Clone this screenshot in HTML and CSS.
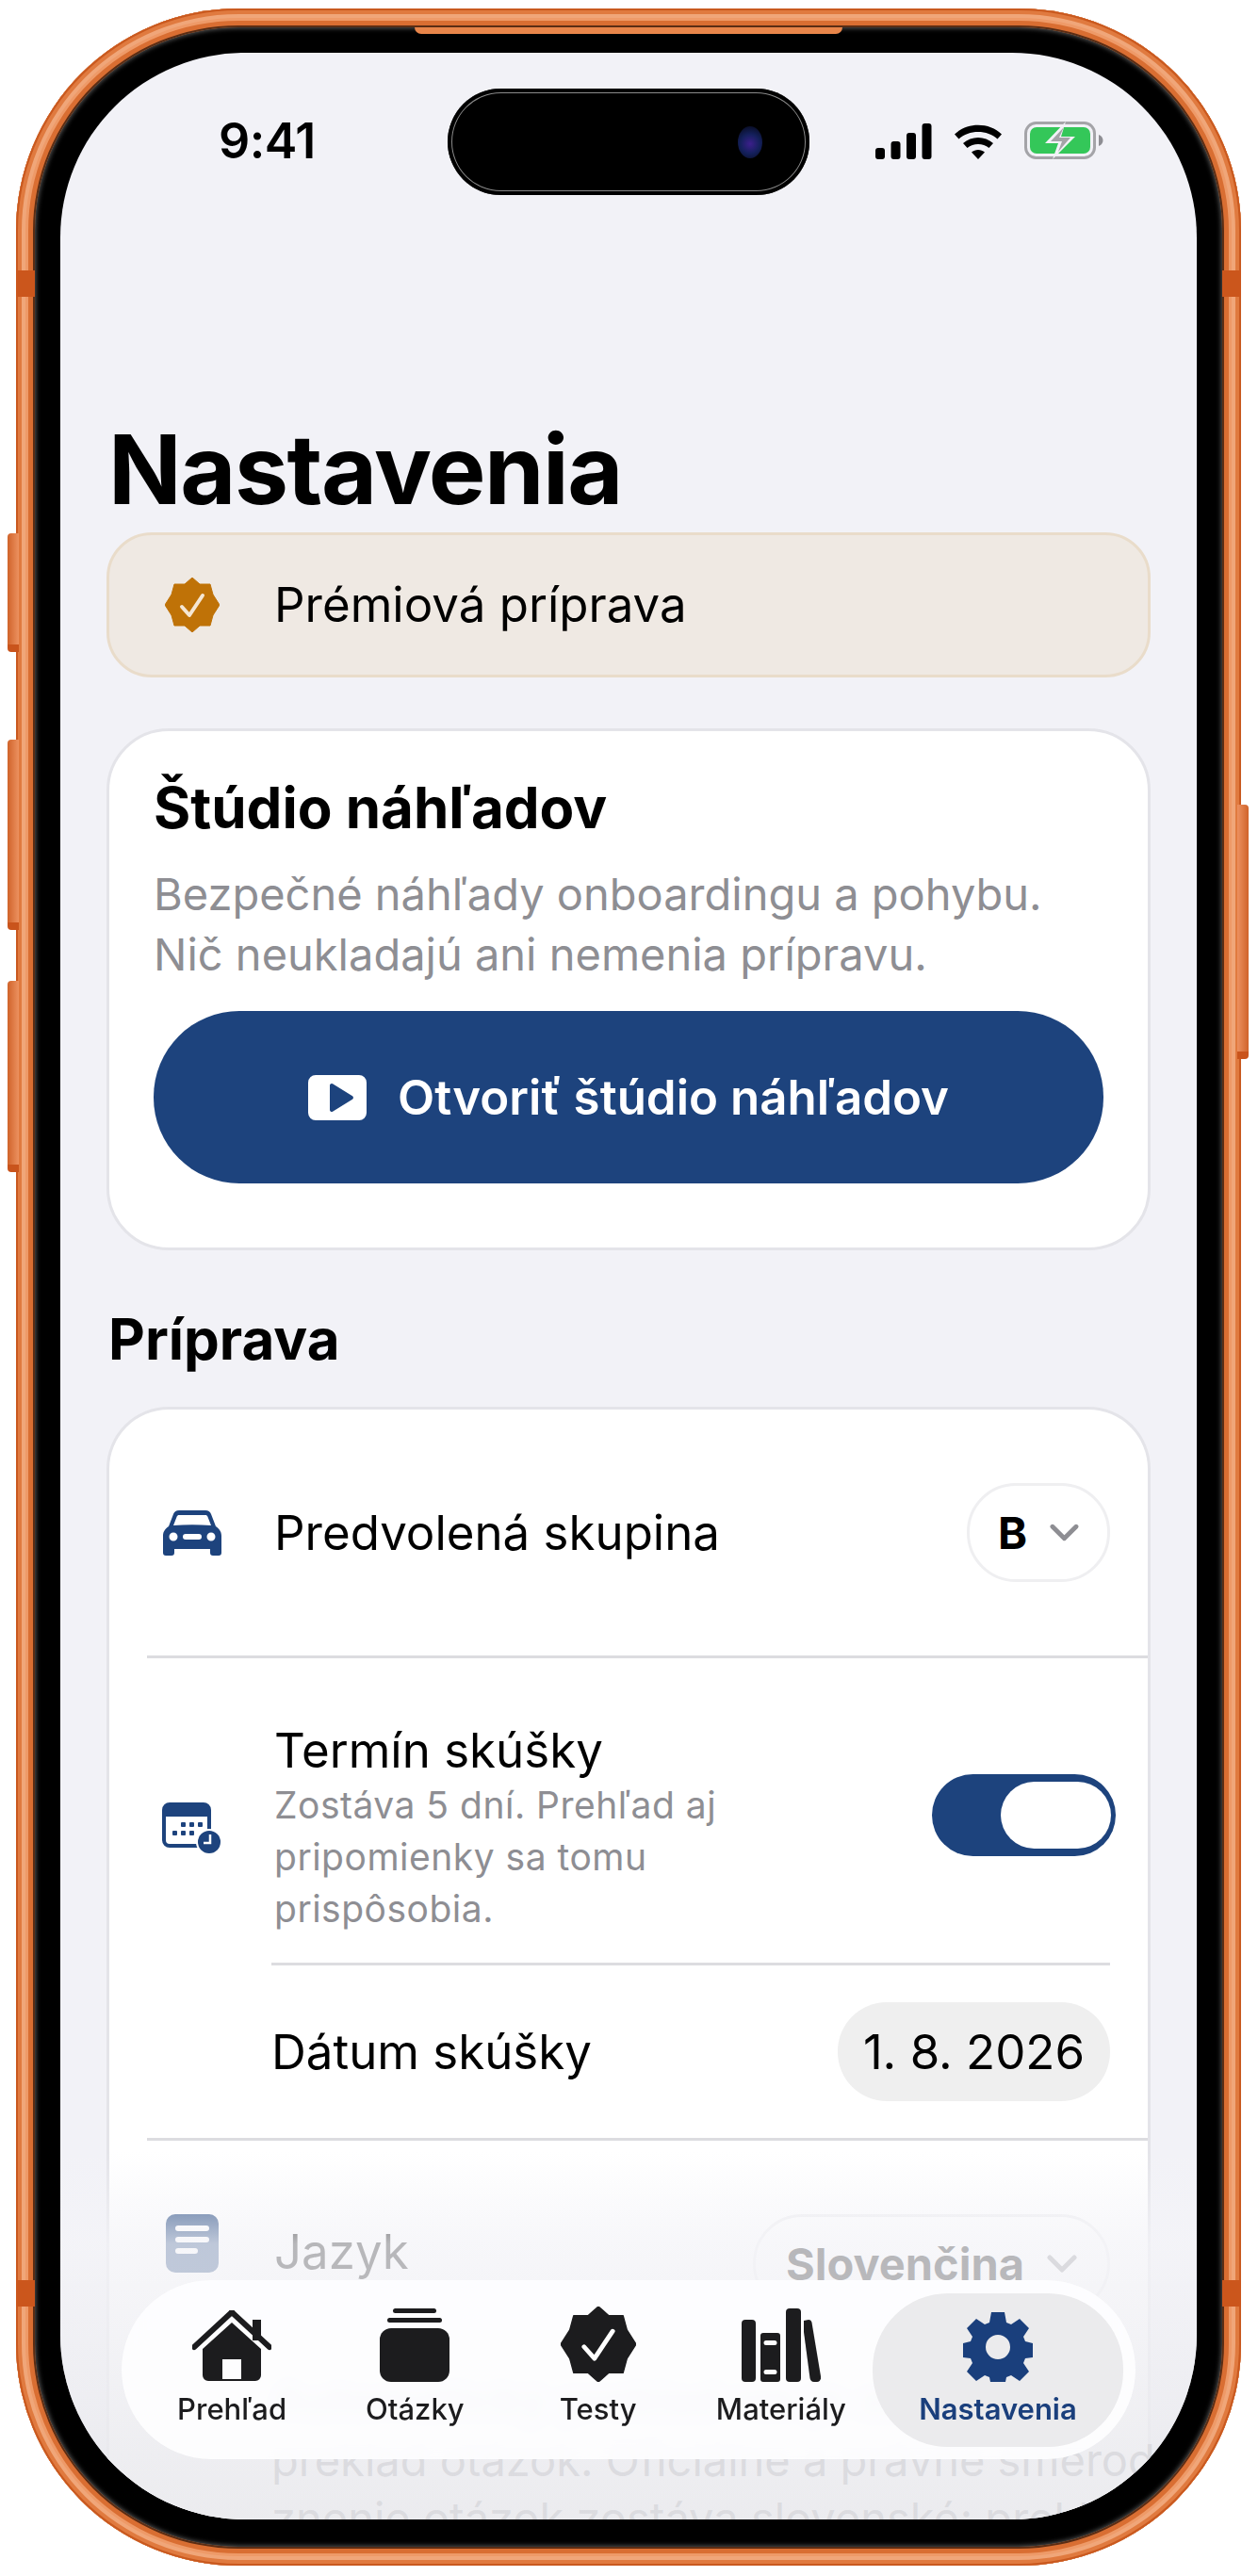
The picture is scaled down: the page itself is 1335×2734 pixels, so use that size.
FILE: index.html
```html
<!DOCTYPE html>
<html lang="sk">
<head>
  <meta charset="UTF-8">
  <meta name="viewport" content="width=device-width, initial-scale=1.0">
  <title>Nastavenia</title>
  <link rel="stylesheet" href="styles.css">
</head>
<body>
  <div class="phone">
    <span class="side-btn btn-a"></span>
    <span class="side-btn btn-b"></span>
    <span class="side-btn btn-c"></span>
    <span class="side-btn btn-d"></span>
    <span class="band band-lt"></span>
    <span class="band band-rt"></span>
    <span class="band band-lb"></span>
    <span class="band band-rb"></span>

    <div class="bezel">
      <span class="top-lip"></span>
      <div class="screen">
        <div class="statusbar">
          <div class="clock">9:41</div>
          <div class="island">
            <span class="lens"></span>
          </div>
          <div class="status-icons">
            <svg width="60" height="38" viewBox="0 0 60 38"><rect x="0" y="26" width="10" height="12" rx="3"/><rect x="16.500" y="19" width="10" height="19" rx="3"/><rect x="33" y="10" width="10" height="28" rx="3"/><rect x="49.500" y="0" width="10" height="38" rx="3"/></svg>
            <svg width="52" height="38" viewBox="0 0 52 38"><path d="M1 11.500C14-1.500 38-1.500 51 11.500L46.500 16.500C36 6.500 16 6.500 5.500 16.500Z"/><path d="M10 21C19 13 33 13 42 21L37.500 26C31 20.500 21 20.500 14.500 26Z"/><path d="M19 30.500C23 27 29 27 33 30.500L26 38Z"/></svg>
            <svg class="battery" width="84" height="40" viewBox="0 0 84 40"><rect x="1.500" y="1.500" width="73" height="37" rx="11" fill="none" stroke="#a4a4a8" stroke-width="3"/><path d="M79 14c3 1 4.500 3.500 4.500 6s-1.500 5-4.500 6z" fill="#8e8e93"/><rect x="6" y="6" width="64" height="28" rx="7" fill="#34c759"/><path d="M44 0 22 23h14l-6 17 24-24H39z" fill="#f2f2f7"/><path d="M42 6 28 21h12l-4 11 13-15H37z" fill="#a4a4a8"/></svg>
          </div>
        </div>

        <h1 class="page-title">Nastavenia</h1>

        <div class="premium">
          <span class="row-icon">
            <svg width="58" height="58" viewBox="0 0 58 58"><path d="M29 0l8 7h11l3 11 7 11-7 11-3 11H37l-8 7-8-7H10L7 40 0 29l7-11 3-11h11z" fill="#bf7207" stroke="#bf7207" stroke-linejoin="round"/><path d="M18 31l8 9 14-21" fill="none" stroke="#f5e6d3" stroke-width="4" stroke-linecap="round" stroke-linejoin="round"/></svg>
          </span>
          <span class="row-label">Prémiová príprava</span>
        </div>

        <div class="card studio">
          <h2 class="card-title">Štúdio náhľadov</h2>
          <p class="card-desc">Bezpečné náhľady onboardingu a pohybu.<br>Nič neukladajú ani nemenia prípravu.</p>
          <button class="cta">
            <svg width="62" height="48" viewBox="0 0 62 48"><path fill-rule="evenodd" d="M8 0h46a8 8 0 0 1 8 8v32a8 8 0 0 1-8 8H8a8 8 0 0 1-8-8V8a8 8 0 0 1 8-8zM23 11v26a2 2 0 0 0 3 1.700l21-13a2 2 0 0 0 0-3.400l-21-13a2 2 0 0 0-3 1.700z" fill="#fff"/></svg>
            Otvoriť štúdio náhľadov
          </button>
        </div>

        <h2 class="section-title">Príprava</h2>

        <div class="card settings">
          <div class="row row-group">
            <span class="row-icon">
              <svg width="62" height="48" viewBox="0 0 62 48" fill="#1d437d"><path fill-rule="evenodd" d="M17 0h28c3 0 5 1.500 6 4l5 13c3 2 6 5 6 10v18c0 2-1 3-3 3h-6c-2 0-3-1-3-3v-4H12v4c0 2-1 3-3 3H3c-2 0-3-1-3-3V27c0-5 3-8 6-10l5-13c1-2.500 3-4 6-4zM17 5c-1 0-2 .500-2.500 2L11 16c13-1 27-1 40 0l-3.500-9C47 5.500 46 5 45 5zM11 23.500a4.500 4.500 0 1 0 0 9 4.500 4.500 0 0 0 0-9zM51 23.500a4.500 4.500 0 1 0 0 9 4.500 4.500 0 0 0 0-9zM24 25a3 3 0 0 0 0 6h14a3 3 0 0 0 0-6z"/></svg>
            </span>
            <span class="row-label">Predvolená skupina</span>
            <span class="select select-small"><b>B</b><svg class="chev" width="32" height="20" viewBox="0 0 32 20"><path d="M3 3l13 13L29 3" fill="none" stroke="#8e8e93" stroke-width="5" stroke-linecap="round" stroke-linejoin="round"/></svg></span>
          </div>
          <div class="divider"></div>

          <div class="exam">
            <div class="row exam-top">
              <span class="row-icon">
                <svg width="64" height="56" viewBox="0 0 64 56"><rect x="2" y="2" width="48" height="44" rx="6" fill="none" stroke="#1d437d" stroke-width="4"/><path d="M2 8a6 6 0 0 1 6-6h36a6 6 0 0 1 6 6v7H2z" fill="#1d437d"/><g fill="#1d437d"><rect x="20" y="21" width="5" height="5" rx="1"/><rect x="29" y="21" width="5" height="5" rx="1"/><rect x="38" y="21" width="5" height="5" rx="1"/><rect x="11" y="30" width="5" height="5" rx="1"/><rect x="20" y="30" width="5" height="5" rx="1"/><rect x="29" y="30" width="5" height="5" rx="1"/></g><circle cx="50" cy="42" r="14" fill="#fff"/><circle cx="50" cy="42" r="12" fill="#1d437d"/><path d="M51 34v9h-7" fill="none" stroke="#fff" stroke-width="2.500"/></svg>
              </span>
              <div class="exam-text">
                <div class="row-label">Termín skúšky</div>
                <div class="row-sub">Zostáva 5 dní. Prehľad aj<br>pripomienky sa tomu<br>prispôsobia.</div>
              </div>
              <span class="toggle"><span class="knob"></span></span>
            </div>
            <div class="subdivider"></div>
            <div class="row date-row">
              <span class="row-label">Dátum skúšky</span>
              <span class="date-pill">1. 8. 2026</span>
            </div>
          </div>
          <div class="divider"></div>

          <div class="row row-lang">
            <span class="row-icon">
              <svg width="56" height="62" viewBox="0 0 56 62"><path fill-rule="evenodd" d="M10 0h36a10 10 0 0 1 10 10v42a10 10 0 0 1-10 10H10A10 10 0 0 1 0 52V10A10 10 0 0 1 10 0zM13 12a3 3 0 0 0 0 6h30a3 3 0 0 0 0-6zM13 24a3 3 0 0 0 0 6h30a3 3 0 0 0 0-6zM13 36a3 3 0 0 0 0 6h18a3 3 0 0 0 0-6z" fill="#1d437d"/></svg>
            </span>
            <span class="row-label">Jazyk</span>
            <span class="select"><b>Slovenčina</b><svg class="chev" width="32" height="20" viewBox="0 0 32 20"><path d="M3 3l13 13L29 3" fill="none" stroke="#8e8e93" stroke-width="5" stroke-linecap="round" stroke-linejoin="round"/></svg></span>
          </div>
          <div class="translate">
            <div class="translate-title">Automatický preklad nie je záväzný</div>
            <div class="translate-text">preklad otázok. Oficiálne a právne smerodajné<br>znenie otázok zostáva slovenské; preklady ni</div>
          </div>
        </div>

        <div class="scrim"></div>

        <nav class="tabbar">
          <div class="tab">
            <svg width="84" height="76" viewBox="0 0 84 76" fill="#1c1c1e"><path d="M42 2 2 39" fill="none" stroke="#1c1c1e" stroke-width="6" stroke-linecap="round"/><path d="M42 2 82 39" fill="none" stroke="#1c1c1e" stroke-width="6" stroke-linecap="round"/><rect x="64" y="10" width="9" height="22"/><path fill-rule="evenodd" d="M42 13 73 41v28a6 6 0 0 1-6 6H17a6 6 0 0 1-6-6V41zM32 52v21h20V52z"/></svg>
            <span>Prehľad</span>
          </div>
          <div class="tab">
            <svg width="74" height="78" viewBox="0 0 74 78" fill="#1c1c1e"><rect x="14" y="0" width="46" height="5" rx="2.500"/><rect x="8" y="10" width="58" height="5" rx="2.500"/><rect x="0" y="21" width="74" height="57" rx="12"/></svg>
            <span>Otázky</span>
          </div>
          <div class="tab">
            <svg width="80" height="80" viewBox="0 0 58 58"><path d="M29 0l8 7h11l3 11 7 11-7 11-3 11H37l-8 7-8-7H10L7 40 0 29l7-11 3-11h11z" fill="#1c1c1e" stroke="#1c1c1e" stroke-linejoin="round"/><path d="M18 31l8 9 14-21" fill="none" stroke="#fff" stroke-width="3.500" stroke-linecap="round" stroke-linejoin="round"/></svg>
            <span>Testy</span>
          </div>
          <div class="tab">
            <svg width="84" height="78" viewBox="0 0 84 78" fill="#1c1c1e"><rect x="0" y="12" width="15" height="66" rx="4"/><path fill-rule="evenodd" d="M23 26h15a3 3 0 0 1 3 3v46a3 3 0 0 1-3 3H23a3 3 0 0 1-3-3V29a3 3 0 0 1 3-3zM26 34a2 2 0 0 0 0 5h9a2 2 0 0 0 0-5zM26 65a2 2 0 0 0 0 5h9a2 2 0 0 0 0-5z"/><rect x="47" y="0" width="16" height="78" rx="4"/><path d="M66 13l5-1c2 0 3 1 3.500 3L84 72c.500 3-1 6-4 6h-3c-3 0-4-2-4.500-4L66 25z"/></svg>
            <span>Materiály</span>
          </div>
          <div class="tab tab-active">
            <svg width="74" height="74" viewBox="0 0 74 74"><path fill-rule="evenodd" d="M30 0h14l2 11 5 2 9-6 10 10-6 9 2 5 8 2v15l-8 1-2 5 6 9-10 10-9-6-5 2-2 10H30l-2-10-5-2-9 6L4 63l6-9-2-5-8-1V33l8-2 2-5-6-9L14 7l9 6 5-2zM37 24a13 13 0 1 0 0 26 13 13 0 0 0 0-26z" fill="#1a3f7c"/></svg>
            <span>Nastavenia</span>
          </div>
        </nav>
      </div>
    </div>
  </div>
</body>
</html>
```

FILE: styles.css
```css
* {
  box-sizing: border-box;
}
html, body {
  margin: 0;
  background: #fff;
}
body {
  width: 1335px;
  height: 2734px;
  padding: 9px 18px 11px 17px;
  font-family: Inter, "Noto Sans", sans-serif;
  color: #000;
  overflow: hidden;
}

/* phone frame */
.phone {
  position: relative;
  width: 1300px;
  height: 2714px;
  padding: 20px;
  border-radius: 236px;
  background: #e8854a;
  box-shadow: inset 0 0 0 2px #c9591f, inset 0 0 0 6px #e07a3f, inset 0 0 0 10px #f0a679, inset 0 0 0 13px #ee9a68, inset 0 0 0 18px #d96e32, inset 0 0 0 20px #5b2d14;
}
.side-btn {
  position: absolute;
  width: 12px;
  border-radius: 4px 0 0 4px;
  background: linear-gradient(90deg, #d0632a, #ec9160);
  border-bottom: 8px solid #c9541c;
}
.btn-a { left: -9px; top: 557px; height: 126px; }
.btn-b { left: -9px; top: 776px; height: 202px; }
.btn-c { left: -9px; top: 1032px; height: 203px; }
.btn-d { right: -8px; top: 845px; height: 270px; border-radius: 0 4px 4px 0; background: linear-gradient(270deg, #d0632a, #ec9160); }
.band {
  position: absolute;
  width: 20px;
  height: 28px;
  background: #cb561c;
}
.band-lt { left: 0; top: 278px; }
.band-rt { right: 0; top: 278px; }
.band-lb { left: 0; top: 2411px; }
.band-rb { right: 0; top: 2411px; }

.bezel {
  position: relative;
  height: 100%;
  padding: 27px 27px 29px;
  background: #000;
  border-radius: 216px;
  box-shadow: inset 0 0 5px 1px rgba(255,255,255,.35);
}
.top-lip {
  position: absolute;
  left: 403px;
  right: 403px;
  top: 0;
  height: 7px;
  background: #e8854a;
  border-radius: 0 0 10px 10px;
}
.screen {
  position: relative;
  height: 100%;
  background: #f2f2f7;
  border-radius: 196px;
  overflow: hidden;
  padding: 0 49px;
}

/* status bar */
.statusbar {
  display: flex;
  align-items: flex-start;
  height: 385px;
  margin: 0 -49px;
  padding: 38px 0 0;
  position: relative;
}
.clock {
  width: 411px;
  padding: 27px 0 0 168px;
  font-size: 52px;
  line-height: 58px;
  font-weight: 600;
  letter-spacing: -.5px;
}
.island {
  width: 384px;
  height: 113px;
  border-radius: 57px;
  background: #000;
  box-shadow: inset 0 0 0 4px #000, inset 0 0 0 5px #8a8a8a;
  display: flex;
  align-items: center;
  justify-content: flex-end;
  padding-right: 50px;
}
.lens {
  width: 26px;
  height: 34px;
  border-radius: 50%;
  background: radial-gradient(circle at 50% 55%, #3c1f8c 0, #14205c 45%, #05060f 100%);
}
.status-icons {
  display: flex;
  align-items: center;
  gap: 23px;
  padding: 36px 0 0 70px;
}
.battery {
  margin-top: -1px;
}

.page-title {
  margin: 0;
  height: 124px;
  padding-left: 2px;
  font-size: 102px;
  line-height: 114px;
  font-weight: 700;
  letter-spacing: -1.5px;
}

/* cards */
.premium {
  display: flex;
  align-items: center;
  height: 154px;
  background: #efe9e3;
  border: 3px solid #e9dcca;
  border-radius: 48px;
  margin-bottom: 54px;
}
.card {
  background: #fff;
  border: 3px solid #e4e4e9;
  border-radius: 66px;
}
.row-icon {
  flex: none;
  width: 175px;
  display: flex;
  justify-content: center;
  padding-right: 0;
}
.row-label {
  font-size: 51px;
  line-height: 60px;
}
.studio {
  height: 554px;
  padding: 45px 47px 0;
}
.card-title {
  margin: 0;
  font-size: 60px;
  line-height: 72px;
  font-weight: 700;
}
.card-desc {
  margin: 24px 0 28px;
  font-size: 47px;
  line-height: 64px;
  color: #8e8e93;
}
.cta {
  display: flex;
  align-items: center;
  justify-content: center;
  gap: 33px;
  width: 100%;
  height: 183px;
  border: none;
  border-radius: 91px;
  background: #1d437d;
  color: #fff;
  font-family: inherit;
  font-size: 51px;
  font-weight: 600;
}
.section-title {
  margin: 0;
  height: 166px;
  padding: 58px 0 0 2px;
  font-size: 60px;
  line-height: 72px;
  font-weight: 700;
}

/* settings list */
.settings {
  border-bottom: none;
  height: 1400px;
  border-radius: 66px 66px 0 0;
}
.row {
  display: flex;
  align-items: center;
}
.row-group {
  height: 261px;
  padding-right: 40px;
}
.row-group .row-label, .row-lang .row-label {
  flex: 1;
}
.divider {
  height: 3px;
  margin-left: 40px;
  background: #dcdce0;
}
.select {
  display: flex;
  align-items: center;
  gap: 24px;
  height: 105px;
  padding: 0 32px;
  border: 3px solid #efeff1;
  border-radius: 52px;
  font-size: 47px;
}
.select b {
  font-weight: 700;
}
.select-small {
  width: 152px;
  padding: 0 30px;
}
.exam {
  padding: 68px 40px 0 0;
}
.exam-top {
  align-items: center;
}
.exam-text {
  flex: 1;
}
.row-sub {
  font-size: 39px;
  line-height: 55px;
  letter-spacing: .5px;
  color: #8e8e93;
}
.toggle {
  display: flex;
  align-items: center;
  justify-content: flex-end;
  width: 195px;
  height: 87px;
  padding: 0 5px;
  margin-top: -29px;
  margin-right: -6px;
  border-radius: 44px;
  background: #1d437d;
}
.knob {
  width: 117px;
  height: 71px;
  border-radius: 36px;
  background: #fff;
}
.subdivider {
  height: 3px;
  margin: 30px 0 0 172px;
  background: #dcdce0;
}
.date-row {
  height: 183px;
  margin-left: 172px;
  justify-content: space-between;
}
.date-pill {
  width: 289px;
  height: 105px;
  border-radius: 52px;
  background: #efefef;
  font-size: 51px;
  line-height: 105px;
  text-align: center;
}
.row-lang {
  height: 184px;
  padding: 78px 40px 0 0;
  align-items: flex-start;
}
.row-lang .row-label {
  padding: 10px 0 0;
}
.translate {
  padding: 0 40px 0 172px;
}
.translate-title {
  margin-top: 60px;
  font-size: 47px;
  font-weight: 700;
  line-height: 60px;
  color: #1d437d;
  white-space: nowrap;
}
.translate-text {
  margin-top: 4px;
  font-size: 47px;
  line-height: 62px;
  color: #8e8e93;
  white-space: nowrap;
}

/* bottom fade and floating tab bar */
.scrim {
  position: absolute;
  left: 0;
  right: 0;
  bottom: 0;
  height: 390px;
  background: linear-gradient(180deg, rgba(242,242,247,0) 0, rgba(244,244,248,.75) 25%, rgba(232,232,236,.86) 100%);
}
.tabbar {
  position: absolute;
  left: 65px;
  right: 65px;
  bottom: 64px;
  height: 190px;
  display: flex;
  align-items: center;
  padding: 0 13px 0 20px;
  border-radius: 95px;
  background: rgba(254,254,255,.9);
  backdrop-filter: blur(10px);
}
.tab {
  flex: 1;
  height: 163px;
  display: flex;
  flex-direction: column;
  align-items: center;
  justify-content: flex-end;
  gap: 11px;
  padding-bottom: 22px;
  border-radius: 80px;
  font-size: 31px;
  line-height: 36px;
  font-weight: 500;
  color: #1c1c1e;
}
.tab-active {
  flex: none;
  width: 266px;
  background: #ebebed;
  color: #1a3f7c;
  font-weight: 600;
}
```
